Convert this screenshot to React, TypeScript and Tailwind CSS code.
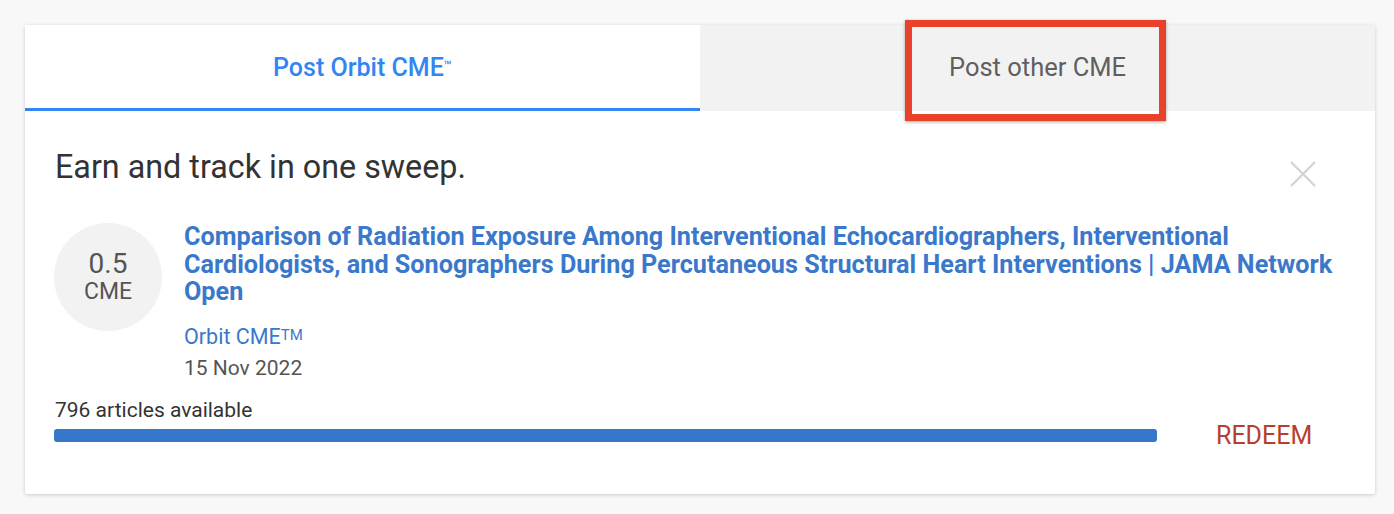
import React from "react";

export default function App() {
  return (
    <div
      className="w-full h-[514px] bg-[#f8f8f8] pt-[25px] pl-[25px]"
      style={{ fontFamily: "Roboto, 'Liberation Sans', sans-serif" }}
    >
      <div className="w-[1350px] h-[469px] bg-white rounded-[3px] shadow-[0_1px_4px_rgba(0,0,0,0.18)] flex flex-col">
        {/* Tabs */}
        <div className="flex h-[86px] shrink-0">
          <div className="w-[675px] flex items-center justify-center border-b-[3px] border-[#3385f2] bg-white">
            <span className="text-[25px] text-[#3385f2] font-medium leading-none pt-[2px]">
              Post Orbit CME<sup className="text-[13px] relative top-[-6px]">™</sup>
            </span>
          </div>
          <div className="w-[675px] relative flex items-center justify-center bg-[#f3f2f3] rounded-tr-[3px]">
            <span className="text-[25.5px] text-[#5f5f5f] leading-none pb-[1px]">Post other CME</span>
            <div className="absolute left-[205px] top-[-5px] w-[261px] h-[101px] border-[7px] border-[#e8432a] shadow-[0_1px_3px_rgba(0,0,0,0.35)]" />
          </div>
        </div>

        {/* Body */}
        <div className="flex flex-col px-[30px]">
          <div className="flex items-start justify-between mt-[37px]">
            <h2 className="text-[32.3px] leading-[38px] text-[#333333]">Earn and track in one sweep.</h2>
            <svg width="28" height="28" viewBox="0 0 28 28" className="mt-[12px] mr-[28px]">
              <path d="M2 2 L26 26 M26 2 L2 26" stroke="#d4d4d4" strokeWidth="2.4" />
            </svg>
          </div>

          <div className="flex mt-[35px]">
            <div className="w-[108px] h-[108px] rounded-full bg-[#f2f2f2] flex flex-col items-center justify-center shrink-0 -ml-[1px]">
              <span className="text-[28px] leading-[30px] text-[#555555]">0.5</span>
              <span className="text-[23px] leading-[26px] text-[#555555]">CME</span>
            </div>
            <div className="ml-[22px] flex flex-col w-[1165px]">
              <a className="text-[25.2px] leading-[27.5px] font-bold text-[#3a78cb]">
                Comparison of Radiation Exposure Among Interventional Echocardiographers, Interventional
                Cardiologists, and Sonographers During Percutaneous Structural Heart Interventions | JAMA Network Open
              </a>
              <div className="mt-[18px] text-[21.5px] leading-[26px] text-[#3a78cb]">
                Orbit CME<sup className="text-[15px] relative top-[-4px]">TM</sup>
              </div>
              <div className="mt-[5px] text-[21px] leading-[26px] text-[#555555]">15 Nov 2022</div>
            </div>
          </div>

          <div className="mt-[16px] text-[21px] leading-[26px] text-[#333333]">796 articles available</div>
          <div className="flex items-center -mt-[1px]">
            <div className="w-[1103px] h-[13px] rounded-[3px] bg-[#3677c9] -ml-[1px]" />
            <span className="ml-[59px] text-[25px] leading-[28px] text-[#b73e2c]">REDEEM</span>
          </div>
        </div>
      </div>
    </div>
  );
}
